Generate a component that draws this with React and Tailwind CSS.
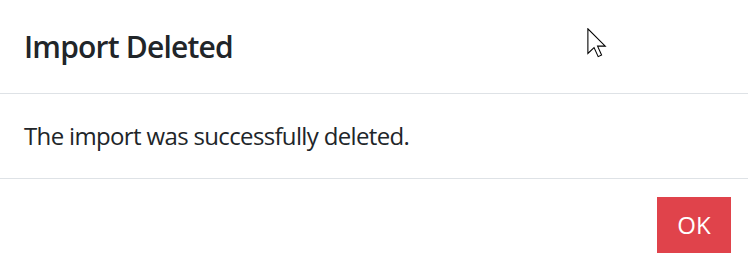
export default function App() {
  return (
    <div className="relative w-[748px] h-[272px] bg-white text-[#212529] font-['Open_Sans','Noto_Sans',sans-serif] overflow-hidden">
      <div className="flex items-center p-[24px] border-b border-[#dee2e6]">
        <h5 className="text-[30px] leading-[45px] font-semibold tracking-[-0.8px]">Import Deleted</h5>
      </div>
      <div className="p-[24px] border-b border-[#dee2e6]">
        <p className="text-[24px] leading-[36px] tracking-[-0.65px]">The import was successfully deleted.</p>
      </div>
      <div className="flex justify-end px-[17px] py-[18px]">
        <button className="bg-[#e0434b] text-white text-[24px] leading-[36px] py-[10px] w-[74px] flex justify-center">
          OK
        </button>
      </div>
      <svg className="absolute left-[587px] top-[28px]" width="21" height="30" viewBox="0 0 13.5 19.5">
        <path
          d="M0.5 0.5 L0.5 16.5 L4.5 12.7 L7.2 18.6 L9.4 17.6 L6.8 11.8 L11.8 11.8 Z"
          fill="white"
          stroke="black"
          strokeWidth="0.7"
          strokeLinejoin="miter"
        />
      </svg>
    </div>
  );
}
